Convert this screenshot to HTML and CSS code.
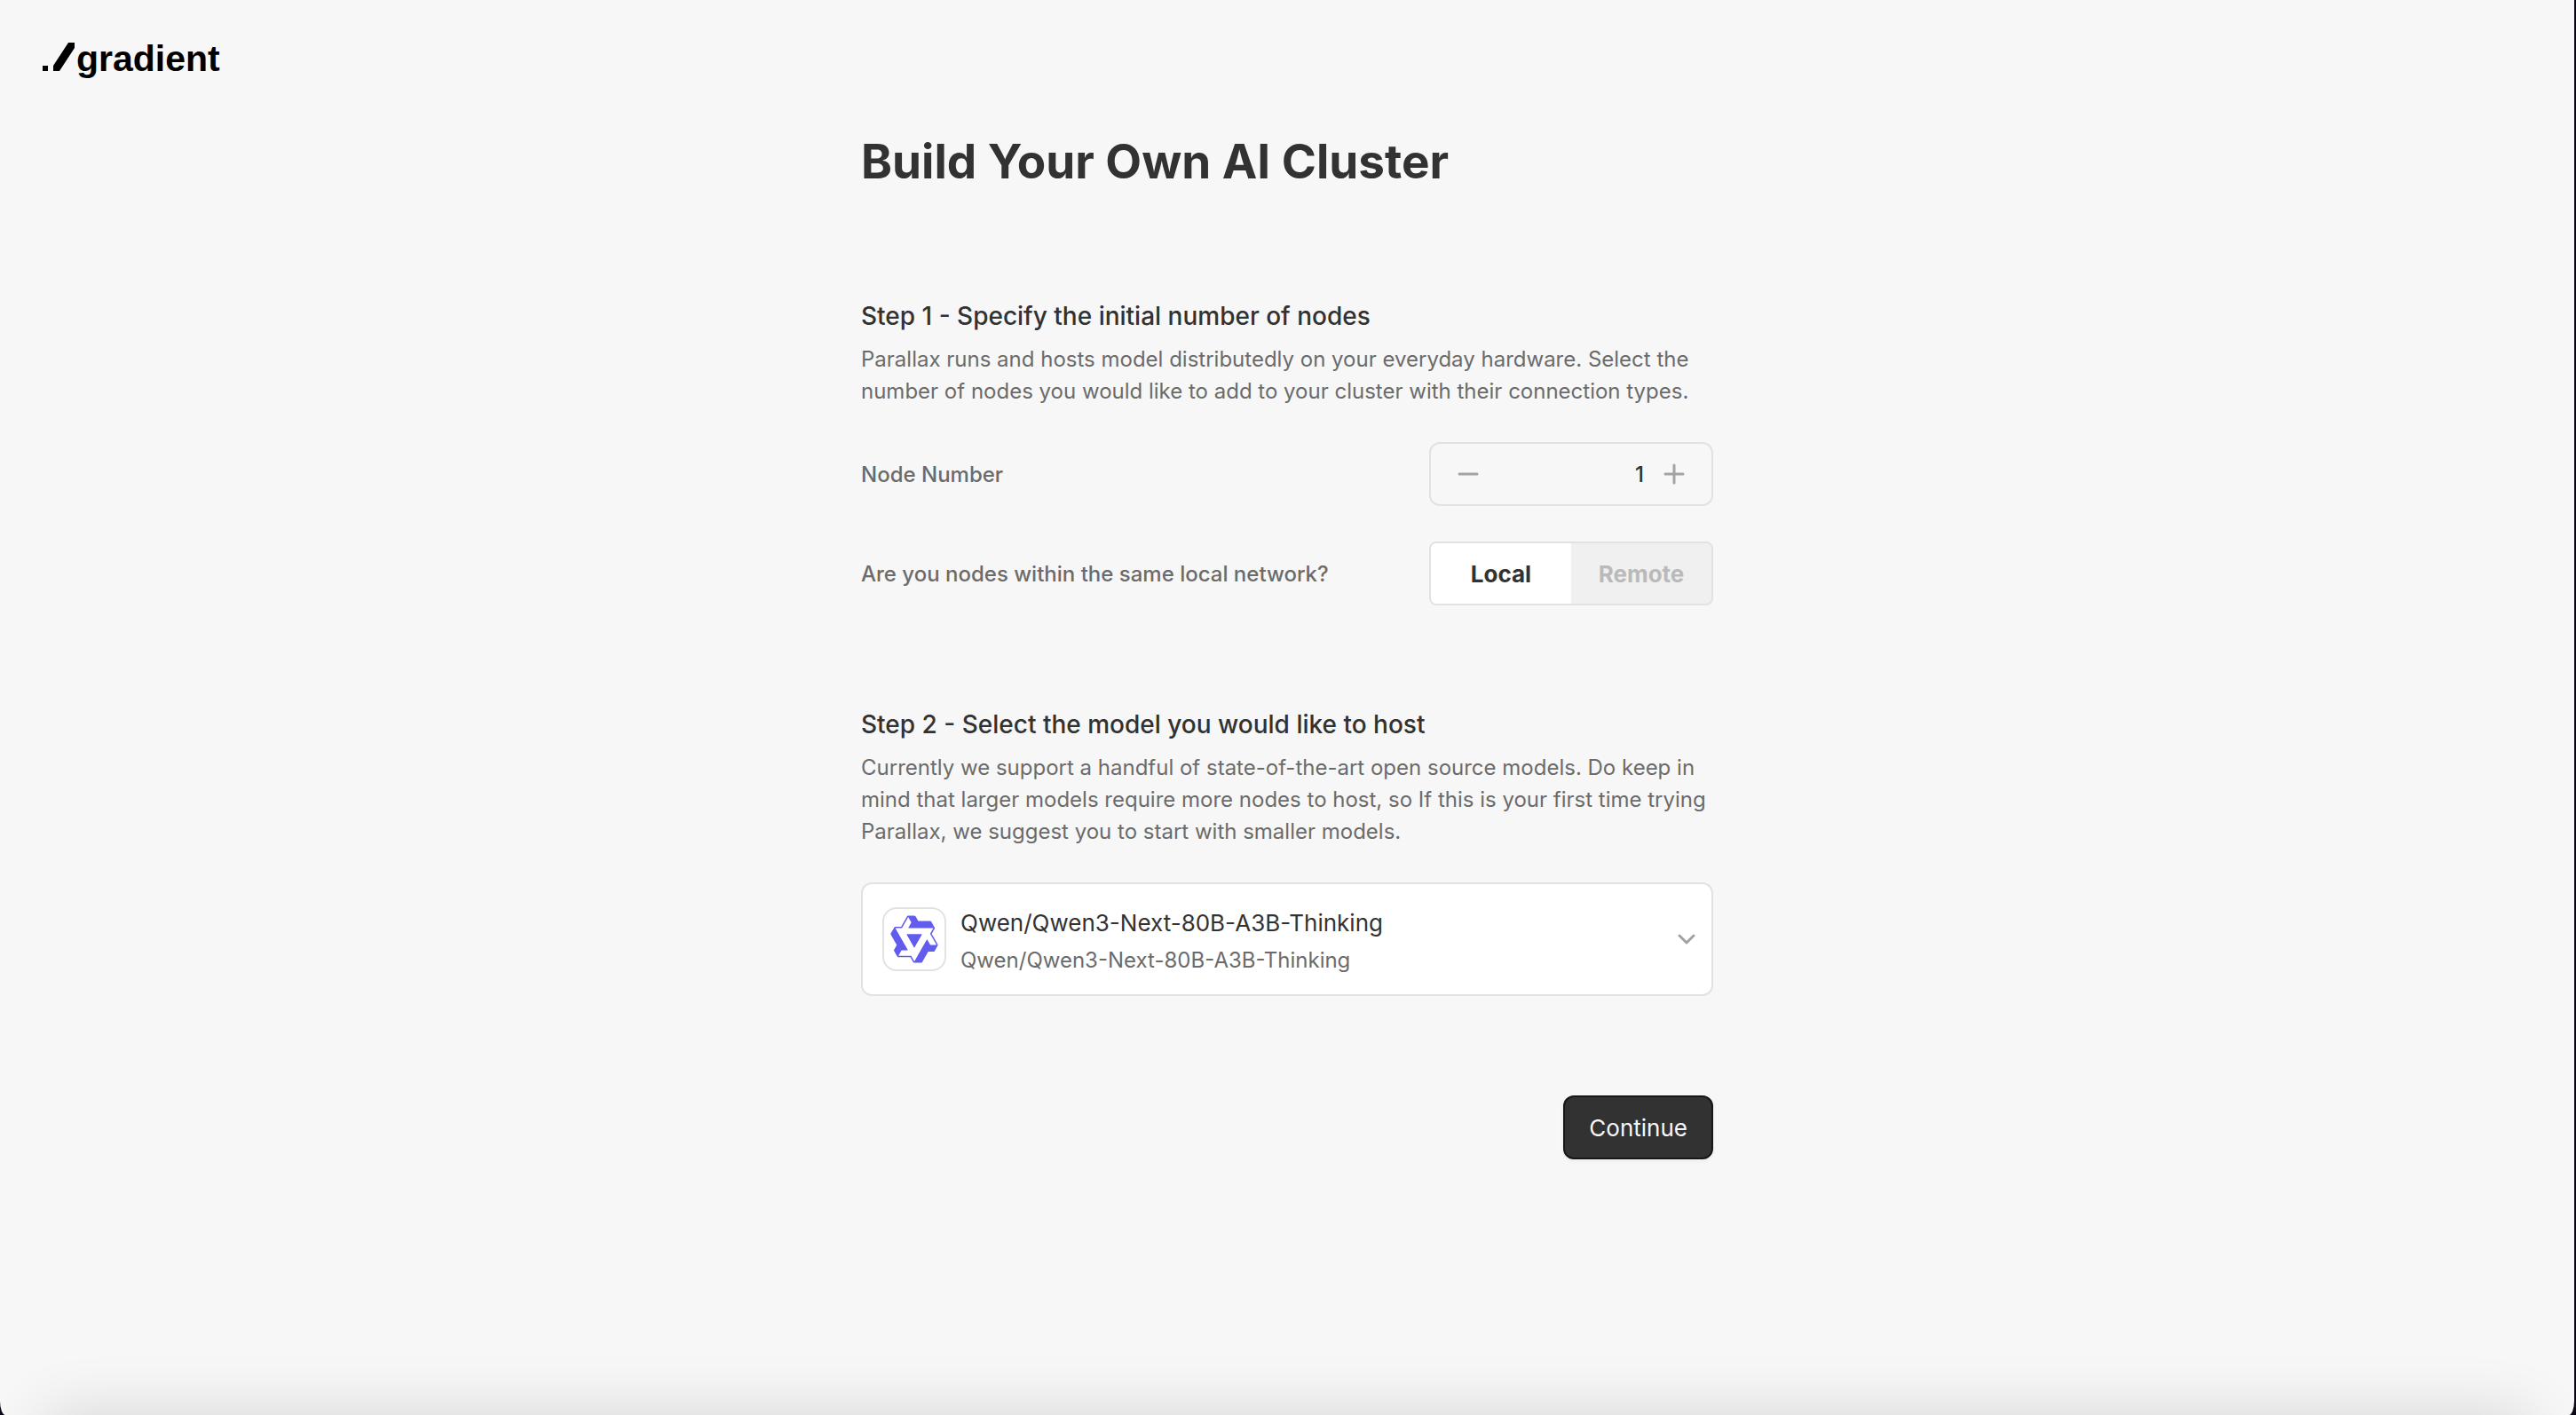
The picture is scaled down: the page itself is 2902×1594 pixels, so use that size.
FILE: index.html
```html
<!DOCTYPE html>
<html lang="en">
<head>
<meta charset="utf-8">
<title>Build Your Own AI Cluster</title>
<link rel="stylesheet" href="styles.css">
</head>
<body>
<div class="window">
  <header class="header">
    <a class="logo" href="#" aria-label="gradient">
      <svg class="logo-mark" viewBox="0 0 36 32" aria-hidden="true">
        <path d="M0 26h6v6H0zM29 0h7v6L19 32h-7v-6z"/>
      </svg>
      <span class="logo-text">gradient</span>
    </a>
  </header>
  <main class="main">
    <h1 class="title">Build Your Own AI Cluster</h1>

    <section class="step">
      <h2 class="step-title">Step 1 - Specify the initial number of nodes</h2>
      <p class="step-text">Parallax runs and hosts model distributedly on your everyday hardware. Select the number of nodes you would like to add to your cluster with their connection types.</p>
      <div class="field">
        <label class="field-label" for="nodes">Node Number</label>
        <div class="stepper">
          <button class="stepper-button" type="button" aria-label="Decrease">
            <svg class="icon" viewBox="0 0 24 24" aria-hidden="true"><path d="M2 12h20"/></svg>
          </button>
          <input class="stepper-input" id="nodes" type="text" inputmode="numeric" value="1">
          <button class="stepper-button" type="button" aria-label="Increase">
            <svg class="icon" viewBox="0 0 24 24" aria-hidden="true"><path d="M2 12h20M12 2v20"/></svg>
          </button>
        </div>
      </div>
      <div class="field">
        <span class="field-label" id="network-label">Are you nodes within the same local network?</span>
        <div class="toggle" role="group" aria-labelledby="network-label">
          <button class="toggle-button toggle-button-selected" type="button" aria-pressed="true">Local</button>
          <button class="toggle-button" type="button" aria-pressed="false">Remote</button>
        </div>
      </div>
    </section>

    <section class="step">
      <h2 class="step-title">Step 2 - Select the model you would like to host</h2>
      <p class="step-text">Currently we support a handful of state-of-the-art open source models. Do keep in mind that larger models require more nodes to host, so If this is your first time trying Parallax, we suggest you to start with smaller models.</p>
      <button class="model" type="button" aria-haspopup="listbox">
        <span class="model-logo">
          <svg class="model-mark" viewBox="0 0 24 24" aria-hidden="true">
            <path fill-rule="evenodd" d="M12.604 1.34c.393.69.784 1.382 1.174 2.075a.18.18 0 00.157.091h5.552c.174 0 .322.11.446.327l1.454 2.57c.19.337.24.478.024.837-.26.43-.513.864-.76 1.3l-.367.658c-.106.196-.223.28-.04.512l2.652 4.637c.172.301.111.494-.043.77-.437.785-.882 1.564-1.335 2.34-.159.272-.352.375-.68.37-.777-.016-1.552-.01-2.327.016a.099.099 0 00-.081.05 575.097 575.097 0 01-2.705 4.74c-.169.293-.38.363-.725.364-.997.003-2.002.004-3.017.002a.537.537 0 01-.465-.271l-1.335-2.323a.09.09 0 00-.083-.049H4.982c-.285.03-.553-.001-.805-.092l-1.603-2.77a.543.543 0 01-.002-.54l1.207-2.12a.198.198 0 000-.197 550.951 550.951 0 01-1.875-3.272l-.79-1.395c-.16-.31-.173-.496.095-.965.465-.813.927-1.625 1.387-2.436.132-.234.304-.334.584-.335a338.3 338.3 0 012.589-.001.124.124 0 00.107-.063l2.806-4.895a.488.488 0 01.422-.246c.524-.001 1.053 0 1.583-.006L11.704 1c.341-.003.724.032.9.34zm-3.432.403a.06.06 0 00-.052.03L6.254 6.788a.157.157 0 01-.135.078H3.253c-.056 0-.07.025-.041.074l5.81 10.156c.025.042.013.062-.034.063l-2.795.015a.218.218 0 00-.2.116l-1.32 2.31c-.044.078-.021.118.068.118l5.716.008c.046 0 .08.02.104.061l1.403 2.454c.046.081.092.082.139 0l5.006-8.76.783-1.382a.055.055 0 01.096 0l1.424 2.53a.122.122 0 00.107.062l2.763-.02a.04.04 0 00.035-.02.041.041 0 000-.04l-2.9-5.086a.108.108 0 010-.113l.293-.507 1.12-1.977c.024-.041.012-.062-.035-.062H9.2c-.059 0-.073-.026-.043-.077l1.434-2.505a.107.107 0 000-.114L9.225 1.774a.06.06 0 00-.053-.031zm6.29 8.02c.046 0 .058.02.034.06l-.832 1.465-2.613 4.585a.056.056 0 01-.05.029.058.058 0 01-.05-.029L8.498 9.841c-.02-.034-.01-.052.028-.054l.216-.012 6.722-.012z"/>
            <path d="M8.5 9.76h7L12 15.9z"/>
          </svg>
        </span>
        <span class="model-names">
          <span class="model-name">Qwen/Qwen3-Next-80B-A3B-Thinking</span>
          <span class="model-id">Qwen/Qwen3-Next-80B-A3B-Thinking</span>
        </span>
        <svg class="chevron" viewBox="0 0 20 12" aria-hidden="true"><path d="M2 2l8 8 8-8"/></svg>
      </button>
    </section>

    <button class="continue" type="button">Continue</button>
  </main>
</div>
</body>
</html>
```

FILE: styles.css
```css
* {
  box-sizing: border-box;
}

body {
  margin: 0;
  background: #0d0819;
  color: #323232;
  font-family: Inter, "Liberation Sans", sans-serif;
}

button,
input {
  margin: 0;
  padding: 0;
  border: 0;
  background: none;
  color: inherit;
  font: inherit;
}

.window {
  position: relative;
  min-height: 100vh;
  margin-right: 2px;
  border-radius: 0 0 6px 6px / 0 0 16px 16px;
  background: #f7f7f7;
  overflow: hidden;
}

/* Soft shade rising from the bottom edge */
.window::after {
  content: "";
  position: absolute;
  right: 50px;
  bottom: -100px;
  left: 50px;
  height: 100px;
  box-shadow: 0 0 70px rgba(0, 0, 0, 0.14);
  pointer-events: none;
}

.header {
  display: flex;
  height: 128px;
  padding: 40px 48px;
}

.logo {
  display: flex;
  align-items: flex-end;
  gap: 2px;
  height: 40px;
  color: #000;
  text-decoration: none;
}

.logo-mark {
  width: 36px;
  height: 32px;
  fill: currentColor;
}

.logo-text {
  font: bold 41px/28px "Liberation Sans", Arial, sans-serif;
}

.main {
  display: flex;
  flex-direction: column;
  width: 960px;
  max-width: 100%;
  margin: 0 auto;
}

.title {
  margin: 16px 0 112px;
  font-size: 53px;
  font-weight: 700;
  line-height: 76px;
}

.step {
  display: flex;
  flex-direction: column;
}

.step + .step {
  margin-top: 110px;
}

.step-title {
  margin: 0;
  font-size: 28px;
  font-weight: 500;
  line-height: 48px;
}

.step-text {
  margin: 7px 0 39px;
  color: #6b6b6b;
  font-size: 24px;
  line-height: 36px;
}

.field {
  display: flex;
  align-items: center;
  justify-content: space-between;
}

.field + .field {
  margin-top: 40px;
}

.field-label {
  color: #6b6b6b;
  font-size: 24px;
  font-weight: 500;
}

.stepper {
  display: flex;
  align-items: center;
  width: 320px;
  height: 72px;
  padding: 0 30px;
  border: 2px solid #e2e2e2;
  border-radius: 12px;
}

.stepper-button {
  display: flex;
  color: #a3a3a3;
}

.icon {
  width: 24px;
  height: 24px;
  fill: none;
  stroke: currentColor;
  stroke-width: 3;
  stroke-linecap: round;
}

.stepper-input {
  flex: 1;
  min-width: 0;
  padding-right: 22px;
  font-size: 24px;
  font-weight: 500;
  text-align: right;
}

.toggle {
  display: flex;
  width: 320px;
  height: 72px;
  border: 2px solid #e2e2e2;
  border-radius: 8px;
  background: #f0f0f0;
  overflow: hidden;
}

.toggle-button {
  flex: 1;
  color: #bababa;
  font-size: 26px;
  font-weight: 700;
}

.toggle-button-selected {
  background: #fff;
  color: #323232;
}

.model {
  display: flex;
  align-items: center;
  gap: 16px;
  min-height: 128px;
  padding: 20px 22px;
  border: 2px solid #e2e2e2;
  border-radius: 12px;
  background: #fff;
  text-align: left;
}

.model-logo {
  display: flex;
  align-items: center;
  justify-content: center;
  width: 72px;
  height: 72px;
  border: 2px solid #e2e2e2;
  border-radius: 16px;
}

.model-mark {
  flex: none;
  width: 58px;
  height: 58px;
  fill: #615ced;
}

.model-names {
  display: flex;
  flex: 1;
  flex-direction: column;
  gap: 4px;
  padding-top: 3px;
}

.model-name {
  font-size: 26px;
  line-height: 40px;
}

.model-id {
  color: #6b6b6b;
  font-size: 24px;
  line-height: 36px;
}

.chevron {
  width: 20px;
  height: 12px;
  margin-right: -4px;
  fill: none;
  stroke: #a3a3a3;
  stroke-width: 3;
  stroke-linecap: round;
  stroke-linejoin: round;
}

.continue {
  align-self: flex-end;
  height: 72px;
  margin-top: 112px;
  padding: 0 27px;
  border: 2px solid #171717;
  border-radius: 12px;
  background: #323232;
  box-shadow: 0 2px 4px rgba(0, 0, 0, 0.05);
  color: #f7f7f7;
  font-size: 26px;
}
```
